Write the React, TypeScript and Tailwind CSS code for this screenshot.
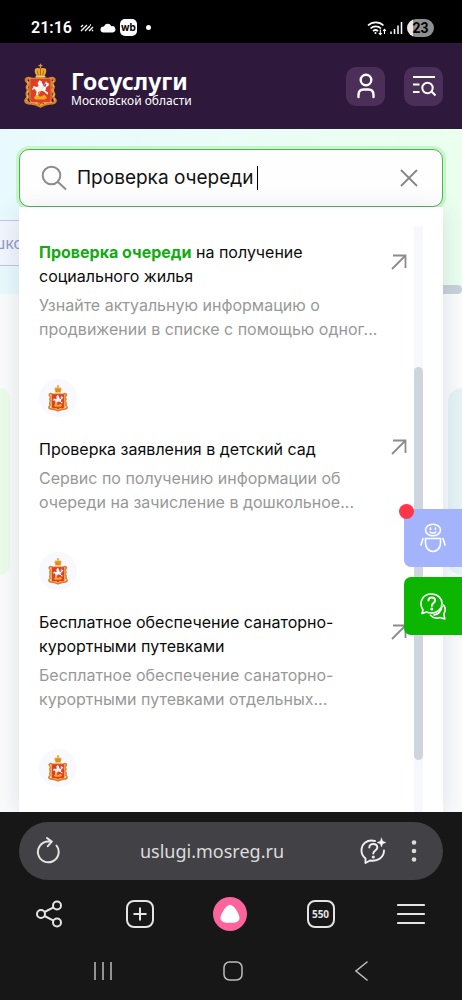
import { clsx } from 'clsx';

interface Suggestion {
  match?: string;
  title: string[];
  description: string[];
}

const suggestions: Suggestion[] = [
  {
    match: 'Проверка очереди',
    title: [' на получение', 'социального жилья'],
    description: ['Узнайте актуальную информацию о', 'продвижении в списке с помощью одног...'],
  },
  {
    title: ['Проверка заявления в детский сад'],
    description: ['Сервис по получению информации об', 'очереди на зачисление в дошкольное...'],
  },
  {
    title: ['Бесплатное обеспечение санаторно-', 'курортными путевками'],
    description: ['Бесплатное обеспечение санаторно-', 'курортными путевками отдельных...'],
  },
];

function Crest({ className }: { className?: string }) {
  return (
    <svg viewBox="0 0 34 46" className={className} aria-hidden="true">
      <path d="M17 0v5M15 2h4" stroke="#d9922e" strokeWidth="1.4" />
      <path d="M11 7c0-3 4-3 6-2 2-1 6-1 6 2 0 2-1 4-2 6h-8c-1-2-2-4-2-6z" fill="#eda72f" />
      <path d="M14 7c0 2 0 3 1 5M20 7c0 2 0 3-1 5M17 5v7" stroke="#a96218" strokeWidth=".9" fill="none" />
      <path d="M12 13.500h10" stroke="#f7cf66" strokeWidth="1.800" />
      <path
        d="M7 15.500c-4-2-6 1-4 3s2 2 .5 4.500 1 2.500.5 5-2 2.500-.5 5-2 3-2 5 3 3 6 3 6 1 9.500 3c3.500-2 6.500-3 9.500-3s6-1 6-3-3.500-2.500-2-5-.5-2.500-1-5 2-2.500.5-5-1.500-2.500.5-4.500 0-5-4-3"
        fill="none"
        stroke="#d97f28"
        strokeWidth="2.800"
      />
      <path
        d="M3.500 18c1.500 2 .5 3 0 5s1 3 .5 5-1.500 3-.5 5-1.500 3-1 4.500 4 2 7 2.500 5 1.500 7.500 2.500c2.500-1 4.500-2 7.500-2.500s6.500-1 7-2.500-2-2.500-1-4.500 0-3-.5-5 1-3 .5-5-1.500-3 0-5"
        fill="none"
        stroke="#f4b855"
        strokeWidth="1.100"
        strokeDasharray="3 2"
      />
      <path d="M6 15h22v22c0 2-1 3-3 3h-5l-3 2-3-2H9c-2 0-3-1-3-3z" fill="#dd3f26" stroke="#f0a23c" />
      <path
        d="M8 27l2-4 3 1 2-1-1-3 2-3 2 1 1 3 2 1 2-3 3 2-1 2-2 1-1 4 3 2-1 2-3-3-3-1-3 1-1 4-2 0 1-4-2-3z"
        fill="#fff5ee"
      />
      <path d="M19.500 20l3.500 1-1 3-2.500-1z" fill="#6a5a9c" />
      <path d="M10 35l3-3 4 2 4-2 3 3-3 2h-9z" fill="#f8a81d" />
      <path d="M23 18L13 35" stroke="#fbd9a0" strokeWidth=".6" />
    </svg>
  );
}

function StatusBar() {
  return (
    <div className="flex h-[43px] shrink-0 items-center bg-black pt-3 pr-[28px] pl-[31px] text-white">
      <span className="font-[Roboto] text-[16px] leading-5 font-semibold">21:16</span>
      <svg viewBox="0 0 14 8" className="ml-2 h-2 w-[14px]" fill="none" stroke="white" strokeWidth="1.300" aria-hidden="true">
        <path d="M1 3l2-2M1 7l6-6M5 7l5-5M9 7l4-4M12 7l1-1M10 1l1 0" />
      </svg>
      <svg viewBox="0 0 16 10" className="ml-1.5 h-[10px] w-4" fill="white" aria-hidden="true">
        <path d="M3.500 9.500a3 3 0 010-6h.4A4 4 0 0111.300 3.200a3.200 3.200 0 011.700 6.300z" />
      </svg>
      <span className="ml-1 flex h-[17px] w-[17px] items-center justify-center rounded-[5px] bg-white pb-0.5 font-[Inter] text-[10px] leading-none font-bold text-black">
        wb
      </span>
      <span className="ml-[9px] h-[5px] w-[5px] rounded-full bg-white" />
      <svg viewBox="0 0 20 16" className="ml-auto h-4 w-5" fill="none" stroke="white" strokeWidth="1.700" aria-hidden="true">
        <path d="M1 5.500a11 11 0 0115.500 0M3.500 8.500a7.500 7.500 0 0110.500 0M6 11a4 4 0 015 0" />
        <circle cx="8.500" cy="13" r="1" fill="white" stroke="none" />
        <path d="M13.300 9.500v5M11.800 13l1.500 1.700 1.500-1.700M17.500 14V9.500M16 11l1.500-1.700L19 11" strokeWidth="1.100" />
      </svg>
      <svg viewBox="0 0 13 13" className="ml-[3px] h-[13px] w-[13px]" stroke="white" strokeWidth="1.500" aria-hidden="true">
        <path d="M1 13v-2.500M4.500 13V8M8 13V4.500M11.500 13V1" />
      </svg>
      <span className="ml-1 flex h-[18px] w-[27px] items-center justify-center rounded-full bg-linear-to-r from-[#e8e8e8] from-23% to-[#909090] to-23% font-[Roboto] text-[14px] leading-none font-bold text-black">
        23
      </span>
    </div>
  );
}

function SiteHeader() {
  return (
    <header className="flex h-[86px] shrink-0 items-center bg-[#2e183b] pr-[19px] pl-6 text-white">
      <a href="#home" className="flex items-center">
        <Crest className="h-[46px] w-[33px]" />
        <span className="ml-[14px] flex flex-col pt-1">
          <span className="text-[23px] leading-[26px] font-bold">Госуслуги</span>
          <span className="text-[12px] leading-[14px]">Московской области</span>
        </span>
      </a>
      <button
        type="button"
        aria-label="Личный кабинет"
        className="ml-auto flex h-[39px] w-[39px] items-center justify-center rounded-[10px] bg-[#4b2f59]"
      >
        <svg viewBox="0 0 18 26" className="h-[26px] w-[18px]" fill="none" stroke="white" strokeWidth="2.400" strokeLinecap="round">
          <circle cx="9" cy="7" r="5.300" />
          <path d="M1.500 24v-2c0-3.500 2-5.500 5-5.500h5c3 0 5 2 5 5.500v2" />
        </svg>
      </button>
      <button
        type="button"
        aria-label="Меню и поиск"
        className="ml-[19px] flex h-[39px] w-[39px] items-center justify-center rounded-[10px] bg-[#4b2f59]"
      >
        <svg viewBox="0 0 24 22" className="h-[22px] w-6" fill="none" stroke="white" strokeWidth="2">
          <path d="M1 2h22M1 9.500h6.500M1 17h6.500M19.500 16.500l4 4" />
          <circle cx="15.500" cy="13" r="5.200" />
        </svg>
      </button>
    </header>
  );
}

/* Page content that shows around the edges of the open search panel. */
function PageBackdrop() {
  return (
    <div className="absolute inset-0 overflow-hidden bg-[#fafcfc]" aria-hidden="true">
      <div className="flex h-[165px] flex-col bg-linear-to-r from-[#e9fafe] to-[#eaffee] pt-[91px]">
        <div className="flex h-[46px] w-[60px] items-center border-y border-[#c3c7e8] bg-[#f2f6fd] text-[16px] text-[#8f9bc8]">
          <span className="-ml-[9px]">шко</span>
        </div>
        <div className="mt-[19px] ml-auto h-[9px] w-1/2 shrink-0 rounded-full bg-[#c9d1db]" />
      </div>
      <div className="mt-[94px] flex justify-between">
        <div className="h-[187px] w-[10px] rounded-r-[14px] bg-[#ebfce9]" />
        <div className="h-[187px] w-[14px] rounded-l-[14px] bg-[#e6f3f7]" />
      </div>
    </div>
  );
}

function SearchBox() {
  return (
    <form className="flex h-[58px] shrink-0 items-center rounded-[10px] border border-[#4db253] bg-[#fefefe] pr-[23px] pl-[21px] ring-3 ring-[#c9f5cb]">
      <svg viewBox="0 0 26 26" className="h-[26px] w-[26px]" fill="none" stroke="#8c8c8c" strokeWidth="2" aria-hidden="true">
        <circle cx="10.500" cy="10.500" r="8.800" />
        <path d="M17 17l8 7.500" />
      </svg>
      <input
        type="text"
        aria-label="Поиск"
        defaultValue="Проверка очереди"
        className="ml-[10px] max-w-full font-[Inter] text-[19px] leading-6 text-[#111] outline-none [field-sizing:content]"
      />
      <span className="ml-1 h-6 w-px bg-black" />
      <button type="button" aria-label="Очистить" className="ml-auto">
        <svg viewBox="0 0 20 20" className="h-5 w-5" stroke="#858585" strokeWidth="1.800">
          <path d="M2 2l16 16M18 2L2 18" />
        </svg>
      </button>
    </form>
  );
}

function SuggestionIcon() {
  return (
    <span className="flex h-[38px] w-[38px] items-center justify-center rounded-full bg-[#f7f9fe]">
      <Crest className="h-[27px] w-5" />
    </span>
  );
}

function SuggestionRow({ item }: { item: Suggestion }) {
  return (
    <li>
      <a href="#service" className="flex items-center">
        <div className="flex-1">
          <SuggestionIcon />
          <p className="mt-5 text-[16px] leading-6 whitespace-nowrap text-[#0b0b0b]">
            {item.title.map((line, i) => (
              <span key={line} className="block">
                {i === 0 && item.match && <b className="font-bold text-[#12ab12]">{item.match}</b>}
                {line}
              </span>
            ))}
          </p>
          <p className="mt-[5px] text-[16px] leading-6 whitespace-nowrap text-[#989898]">
            {item.description.map((line) => (
              <span key={line} className="block">
                {line}
              </span>
            ))}
          </p>
        </div>
        <svg viewBox="0 0 16 16" className="h-4 w-4 shrink-0" fill="none" stroke="#8c8c8c" strokeWidth="1.800" aria-hidden="true">
          <path d="M1 15L14.500 1.500M2 1.500h12.500V14" />
        </svg>
      </a>
    </li>
  );
}

function SuggestionPanel() {
  return (
    <div className="min-h-0 flex-1 bg-white pt-[19px] pr-5 pl-5 font-[Inter] shadow-[0_4px_24px_rgba(40,60,100,0.14)]">
      <div className="flex h-full overflow-hidden">
        {/* scrolled so that the first icon is already out of view */}
        <ul className="-mt-11 flex flex-1 flex-col gap-[38px] pr-[7px]">
          {suggestions.map((item) => (
            <SuggestionRow key={item.title[0]} item={item} />
          ))}
          <li>
            <SuggestionIcon />
          </li>
        </ul>
        <div className="w-[9px] bg-[#f7f8fd] pt-[141px]">
          <div className="h-[393px] rounded-full bg-[#ced5de]" />
        </div>
      </div>
    </div>
  );
}

function FloatingButtons() {
  const base = 'flex h-[58px] w-[58px] items-center justify-center rounded-l-[7px]';
  return (
    <div className="absolute top-[380px] right-0 flex flex-col gap-[10px]">
      <button type="button" aria-label="Робот-помощник" className={clsx(base, 'relative bg-[#a3b4fd]')}>
        <span className="absolute -top-[5px] -left-[5px] h-[15px] w-[15px] rounded-full bg-[#ff3549]" />
        <svg viewBox="0 0 26 30" className="h-[30px] w-[26px]" fill="none" stroke="white" strokeWidth="1.600" strokeLinecap="round">
          <ellipse cx="13" cy="7" rx="7.500" ry="5.800" />
          <path d="M10.500 5v1.500M15.500 5v1.500M10 9c1.500 1.500 4.500 1.500 6 0" />
          <path d="M5.500 15.500h15V20c0 5-3.500 8.500-7.500 8.500S5.500 25 5.500 20zM3 15.500L1 22M23 15.500l2 6.500" />
        </svg>
      </button>
      <button type="button" aria-label="Задать вопрос" className={clsx(base, 'bg-[#0bb500]')}>
        <svg viewBox="0 0 28 28" className="h-7 w-7" fill="none" stroke="white" strokeWidth="1.600" strokeLinecap="round" strokeLinejoin="round">
          <path d="M4 18C-.5 11 3 2 12.500 2 19 2 23 6.500 23 11.500S19 21 12.500 21c-2 0-3.500-.3-5-1L3 21.500z" />
          <path d="M24.500 13c2 2.500 2 6 .3 8.700l1 5.300-4.800-1.500c-4 1.300-7.500 0-9.500-2.300M23 14.500c-1 5-4 8-8 8.500" />
          <path d="M9.500 8.500c0-4 6.500-4 6.500 0 0 2.500-3.200 2.500-3.200 5.500" strokeWidth="2" />
          <circle cx="12.800" cy="17" r=".7" fill="white" />
        </svg>
      </button>
    </div>
  );
}

function AddressBar() {
  return (
    <div className="mx-[19px] flex h-[58px] items-center rounded-full bg-[#424146] pr-[26px] pl-[17px] text-[#dcdcdc]">
      <button type="button" aria-label="Обновить">
        <svg viewBox="0 0 24 28" className="h-7 w-6" fill="none" stroke="#e4e4e4" strokeWidth="2" strokeLinecap="round" strokeLinejoin="round">
          <path d="M20.500 8.500A10.400 10.400 0 1112 4.500h3.500M11 1l4.800 3.600-4 4.600" />
        </svg>
      </button>
      <a href="#address" className="flex-1 pl-[5px] text-center text-[18px] leading-6">
        uslugi.mosreg.ru
      </a>
      <button type="button" aria-label="Спросить">
        <svg viewBox="0 0 28 28" className="h-7 w-7" fill="none" stroke="#f0f0f0" strokeWidth="1.900" strokeLinecap="round" strokeLinejoin="round">
          <path d="M16 4C8 2 2.500 7 2.500 13.500c0 3.500 1.500 6 4 8V26l4.500-2.500c8 1.500 14-3.500 14-10" />
          <path d="M10.300 10.500c0-5 8-4.500 8 0 0 3-4 3-4 6" />
          <circle cx="14.300" cy="20" r=".6" fill="#f0f0f0" />
          <path d="M22.500 1l1.200 3.300L27 5.500l-3.300 1.200L22.500 10l-1.200-3.300L18 5.500l3.300-1.200z" fill="white" strokeWidth=".4" />
        </svg>
      </button>
      <button type="button" aria-label="Ещё" className="ml-[24px]">
        <svg viewBox="0 0 6 24" className="h-6 w-1.5" fill="#dcdcdc">
          <circle cx="3" cy="3.500" r="2.300" />
          <circle cx="3" cy="12" r="2.300" />
          <circle cx="3" cy="20.500" r="2.300" />
        </svg>
      </button>
    </div>
  );
}

function BrowserToolbar() {
  return (
    <div className="mt-[17px] flex items-center justify-between pr-[34px] pl-8">
      <button type="button" aria-label="Поделиться" className="flex w-[34px] justify-center">
        <svg viewBox="0 0 28 28" className="h-7 w-7" fill="none" stroke="#e4e4e4" strokeWidth="2">
          <circle cx="6" cy="14" r="4" />
          <circle cx="22" cy="5.500" r="4" />
          <circle cx="22" cy="22.500" r="4" />
          <path d="M9.500 12l9-4.700M9.500 16l9 4.700" />
        </svg>
      </button>
      <button type="button" aria-label="Новая вкладка" className="flex w-[34px] justify-center">
        <svg viewBox="0 0 28 28" className="h-7 w-7" fill="none" stroke="#e4e4e4" strokeWidth="2">
          <rect x="1" y="1" width="26" height="26" rx="7" />
          <path d="M14 7.500v13M7.500 14h13" />
        </svg>
      </button>
      <button type="button" aria-label="Алиса" className="flex h-[34px] w-[34px] items-center justify-center rounded-full bg-[#fc649b]">
        <svg viewBox="0 0 20 20" className="h-5 w-5" fill="white">
          <path d="M10 .8c3.500 0 9.500 9 9.500 13.200S15 18.800 10 18.800.5 18.200.5 14 6.500.8 10 .8z" />
        </svg>
      </button>
      <button
        type="button"
        aria-label="Вкладки"
        className="mx-[3px] flex h-7 w-7 items-center justify-center rounded-[8px] border-2 border-[#e4e4e4] text-[10px] leading-none font-bold text-[#e4e4e4]"
      >
        550
      </button>
      <button type="button" aria-label="Меню браузера" className="flex w-[34px] justify-center">
        <svg viewBox="0 0 28 22" className="h-[22px] w-7" stroke="#e4e4e4" strokeWidth="2.200" strokeLinecap="round">
          <path d="M1 2h26M1 11h26M1 20h26" />
        </svg>
      </button>
    </div>
  );
}

function SystemNav() {
  return (
    <div className="mt-[30px] flex items-center justify-between px-[92px]">
      <button type="button" aria-label="Недавние">
        <svg viewBox="0 0 20 20" className="h-5 w-5" stroke="#bdbdbd" strokeWidth="1.500">
          <path d="M3 1v18M11 1v18M19 1v18" />
        </svg>
      </button>
      <button type="button" aria-label="Домой">
        <svg viewBox="0 0 20 20" className="h-5 w-5" fill="none" stroke="#bdbdbd" strokeWidth="1.500">
          <rect x="1" y="1" width="18" height="18" rx="5.500" />
        </svg>
      </button>
      <button type="button" aria-label="Назад">
        <svg viewBox="0 0 16 20" className="h-5 w-4" fill="none" stroke="#bdbdbd" strokeWidth="1.600" strokeLinecap="round">
          <path d="M13 1L2 10l11 9" />
        </svg>
      </button>
    </div>
  );
}

export default function App() {
  return (
    <div className="flex h-screen flex-col overflow-hidden font-['Noto_Sans',sans-serif]">
      <StatusBar />
      <SiteHeader />
      <main className="relative min-h-0 flex-1 overflow-hidden">
        <PageBackdrop />
        <div className="relative flex h-full flex-col px-[19px] pt-5">
          <SearchBox />
          <SuggestionPanel />
        </div>
        <FloatingButtons />
      </main>
      <footer className="shrink-0 bg-[#171717] pt-[10px] pb-[19px]">
        <AddressBar />
        <BrowserToolbar />
        <SystemNav />
      </footer>
    </div>
  );
}
